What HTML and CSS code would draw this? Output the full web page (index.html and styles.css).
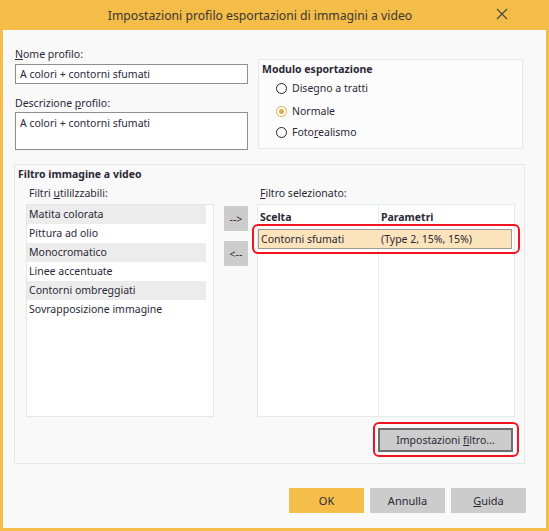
FILE: index.html
```html
<!DOCTYPE html>
<html lang="it">
<head>
<meta charset="utf-8">
<title>Impostazioni profilo</title>
<link rel="stylesheet" href="styles.css">
</head>
<body>
<div class="window">
  <div class="titlebar">
    <span class="title">Impostazioni profilo esportazioni di immagini a video</span>
    <svg class="close" width="12" height="12" viewBox="0 0 12 12"><path d="M1 1 L11 11 M11 1 L1 11" stroke="#444" stroke-width="1.1" fill="none"/></svg>
  </div>
  <div class="body">
    <div class="toprow">
      <div class="leftcol">
        <div class="label"><u>N</u>ome profilo:</div>
        <div class="input">A colori + contorni sfumati</div>
        <div class="label label2">Descrizione <u>p</u>rofilo:</div>
        <div class="textarea">A colori + contorni sfumati</div>
      </div>
      <div class="modgroup">
        <div class="gtitle">Modulo esportazione</div>
        <div class="radio r1"><span class="circle"></span><span>Disegno a tratti</span></div>
        <div class="radio r2"><span class="circle on"></span><span>Normale</span></div>
        <div class="radio r3"><span class="circle"></span><span>Foto<u>r</u>ealismo</span></div>
      </div>
    </div>
    <div class="filtgroup">
      <div class="gtitle ftitle">Filtro immagine a video</div>
      <div class="fgrid">
        <div class="flabel">Filtri <u>u</u>tililzzabili:</div>
        <div></div>
        <div class="flabel flabel-r"><u>F</u>iltro selezionato:</div>
        <div class="list">
          <div class="item alt">Matita colorata</div>
          <div class="item">Pittura ad olio</div>
          <div class="item alt">Monocromatico</div>
          <div class="item">Linee accentuate</div>
          <div class="item alt">Contorni ombreggiati</div>
          <div class="item">Sovrapposizione immagine</div>
        </div>
        <div class="arrows">
          <div class="abtn">--&gt;</div>
          <div class="abtn">&lt;--</div>
        </div>
        <div class="table">
          <div class="tcol c1">
            <div class="th">Scelta</div>
          </div>
          <div class="tcol c2">
            <div class="th">Parametri</div>
          </div>
          <div class="selrow"><span class="s1">Contorni sfumati</span><span class="s2">(Type 2, 15%, 15%)</span></div>
          <div class="mark mark-row"></div>
        </div>
      </div>
      <div class="fbottom">
        <div class="setbtn"><span>Impostazioni <u>f</u>iltro...</span><span class="mark mark-btn"></span></div>
      </div>
    </div>
    <div class="footer">
      <div class="btn ok">OK</div>
      <div class="btn">Annulla</div>
      <div class="btn"><span><u>G</u>uida</span></div>
    </div>
  </div>
</div>
</body>
</html>
```

FILE: styles.css
```css
* { box-sizing: border-box; }
html, body { margin: 0; padding: 0; }
body {
  font-family: "Noto Sans", "Liberation Sans", sans-serif;
  font-size: 10.5px;
  color: #2b2836;
  background: #fff;
}
u { text-decoration: underline; text-underline-offset: 1px; }
.window {
  width: 549px;
  height: 531px;
  display: flex;
  flex-direction: column;
}
.titlebar {
  height: 30px;
  background: #f4bd48;
  display: flex;
  align-items: center;
  position: relative;
  padding-right: 29px;
}
.title {
  flex: 1;
  text-align: center;
  font-size: 12.2px;
  color: #3a3636;
}
.close {
  position: absolute;
  right: 41px;
  top: 8px;
}
.body {
  flex: 1;
  background: #f9f9f9;
  border: 3px solid #f4bd48;
  border-top: none;
  padding: 0 21px 0 11px;
  display: flex;
  flex-direction: column;
}
.toprow {
  display: flex;
  padding: 16px 0 0 1px;
  height: 134px;
}
.leftcol {
  width: 233px;
  display: flex;
  flex-direction: column;
}
.label { height: 16px; line-height: 16px; margin-bottom: 2px; }
.label2 { margin-top: 11px; margin-bottom: 1px; }
.input, .textarea {
  background: #fff;
  border: 1px solid #8e8e8e;
  padding: 0 4px;
  line-height: 18px;
}
.input { height: 20px; }
.textarea { height: 38px; padding-top: 1px; }
.modgroup {
  margin-left: 10px;
  margin-top: 13px;
  width: 265px;
  height: 90px;
  background: #fcfcfc;
  border: 1px solid #e8e8e8;
  padding: 2px 0 0 3px;
}
.gtitle { font-weight: bold; line-height: 14px; }
.radio {
  display: flex;
  align-items: center;
  margin-left: 14px;
  height: 16px;
}
.r1 { margin-top: 4px; }
.r2 { margin-top: 7px; }
.r3 { margin-top: 5px; }
.circle {
  width: 11px;
  height: 11px;
  border: 1.2px solid #24222e;
  border-radius: 50%;
  margin-right: 5px;
  display: flex;
  align-items: center;
  justify-content: center;
  background: #fff;
}
.circle.on { border-color: #e2ac44; }
.circle.on::after {
  content: "";
  width: 5px;
  height: 5px;
  border-radius: 50%;
  background: #e2ac44;
}
.filtgroup {
  height: 300px;
  border: 1px solid #e6e6e6;
  padding: 1px 0 0 11px;
  display: flex;
  flex-direction: column;
}
.ftitle { margin-left: -8px; height: 16px; line-height: 16px; }
.fgrid {
  display: grid;
  grid-template-columns: 188px 24px 257px;
  column-gap: 10px;
  grid-template-rows: 22px 213px;
}
.flabel { padding-left: 3px; line-height: 16px; padding-top: 3px; }
.flabel-r { margin-left: -1px; }
.list {
  background: #fff;
  border: 1px solid #e6e6e6;
}
.item {
  height: 19px;
  line-height: 19px;
  padding-left: 2px;
  width: 179px;
}
.item.alt { background: #ececec; }
.arrows {
  display: flex;
  flex-direction: column;
  gap: 10px;
  padding-top: 2px;
}
.abtn {
  height: 25px;
  background: #cccccc;
  display: flex;
  align-items: center;
  justify-content: center;
  font-size: 10.5px;
}
.table {
  position: relative;
  background: #fff;
  border: 1px solid #e6e9ee;
  display: flex;
  margin-left: -1px;
}
.tcol { height: 100%; }
.c1 { width: 121px; border-right: 1px solid #e6ecf3; }
.c2 { flex: 1; }
.th {
  font-weight: bold;
  height: 24px;
  line-height: 20px;
  padding: 2px 0 0 2px;
}
.selrow {
  position: absolute;
  left: 0;
  right: 2px;
  top: 24px;
  height: 20px;
  background: #fbe3bb;
  border: 1px solid #9b9b9b;
  display: flex;
  line-height: 18px;
}
.s1 { width: 120px; padding-left: 2px; }
.s2 { padding-left: 2px; }
.mark {
  position: absolute;
  border: 2px solid #f0141e;
  border-radius: 6px;
  pointer-events: none;
}
.mark-row { left: -6px; top: 19px; width: 268px; height: 30px; }
.fbottom {
  display: flex;
  justify-content: flex-end;
  padding-right: 11px;
  margin-top: 11px;
}
.setbtn {
  position: relative;
  width: 135px;
  height: 24px;
  background: #cccccc;
  border: 2px solid #6d6d6d;
  display: flex;
  align-items: center;
  justify-content: center;
}
.mark-btn { left: -7px; top: -8px; right: -8px; bottom: -7px; }
.footer {
  display: flex;
  justify-content: flex-end;
  gap: 6px;
  margin-top: 24px;
  margin-right: -1px;
}
.btn {
  width: 75px;
  height: 25px;
  background: #cccccc;
  display: flex;
  align-items: center;
  justify-content: center;
  font-size: 11px;
}
.btn.ok { background: #f5be4a; }
```
